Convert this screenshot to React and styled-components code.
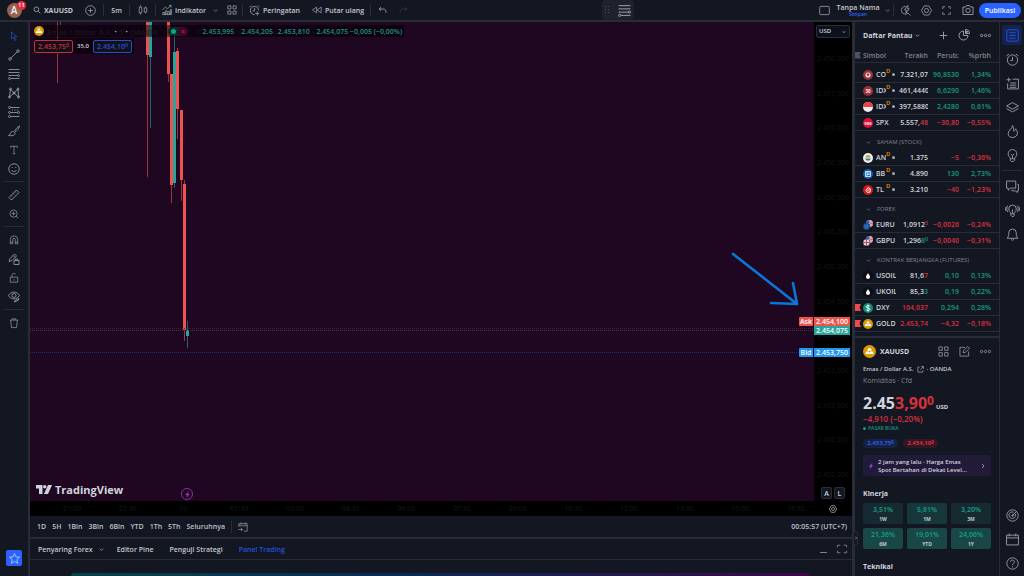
import React, { useState } from "react";
import styled, { createGlobalStyle, css } from "styled-components";

const GlobalStyle = createGlobalStyle`
  * { box-sizing: border-box; }
  html, body { margin: 0; background: #131722; }
  body {
    font-family: "Open Sans", "Noto Sans", sans-serif;
    font-size: 7px;
    line-height: 9px;
    color: #d1d4dc;
    overflow: hidden;
  }
  button, select {
    font: inherit;
    color: inherit;
    background: none;
    border: 0;
    padding: 0;
    margin: 0;
  }
  button { cursor: pointer; }
  a { color: inherit; text-decoration: none; }
  svg { display: block; flex: none; }
`;

const UP = "#159983";
const DOWN = "#d9303f";
const LINE = "#282c37";

/* ---------- icons ---------- */

const paths = {
  search: <><circle cx="10" cy="10" r="7" /><path d="M15.500 15.500 22 22" /></>,
  plusCircle: <><circle cx="12" cy="12" r="10.500" /><path d="M12 7v10M7 12h10" /></>,
  candles: <path d="M6 1v4M6 19v4M18 4v3M18 17v3M3 5h6v14H3zM15 7h6v10h-6z" />,
  indicator: <path d="M1 12 8 5l5 4 9-8M17 1h5v5M2 23v-5h4v5M8 23v-9h4v9M14 23v-7h4v7M20 23V11h3v12M1 23h22" />,
  chevron: <path d="m4 8 8 8 8-8" />,
  chevronRight: <path d="m8 4 8 8-8 8" />,
  grid: <path d="M2 2h7.500v7.500H2zM14.500 2H22v7.500h-7.500zM2 14.500h7.500V22H2zM14.500 14.500H22V22h-7.500z" />,
  alarm: <><path d="M12 21a9 9 0 1 1 9-9M12 6v7H8M1 5l4-4M19 1l4 4" /><path d="M18 14v9M13.500 18.500h9" /></>,
  clock: <><circle cx="12" cy="13" r="9.500" /><path d="M12 7v7H8M1 5.500 5.500 2M18.500 2 23 5.500" /></>,
  rewind: <path d="M11 5v14L1 12zM22 5v14l-10-7z" />,
  undo: <path d="M8 3 3 8l5 5M3 8h11c5 0 7 3 7 8v2" />,
  redo: <path d="m16 3 5 5-5 5M21 8H10c-5 0-7 3-7 8v2" />,
  square: <rect x="1.500" y="3" width="21" height="18" rx="2" />,
  quick: <><path d="M12 3a8.500 8.500 0 1 0 5 15M17 17l6 6" /><path d="m15 2-5 9h4l-1 7 7-10h-4l2-6z" /></>,
  hexagon: <><path d="M7 2h10l6 10-6 10H7L1 12z" /><circle cx="12" cy="12" r="4.500" /></>,
  full: <path d="M2 8V2h6M16 2h6v6M22 16v6h-6M8 22H2v-6" />,
  camera: <><path d="M2 6h5l2-3h6l2 3h5v15H2z" /><circle cx="12" cy="13" r="4.500" /></>,
  plus: <path d="M12 2v20M2 12h20" />,
  pie: <><path d="M11 4a9 9 0 1 0 9 9h-9z" /><path d="M15 1v8h8c0-5-3-8-8-8zM16 8l5-5M16 4l3 3" /></>,
  dots: <><circle cx="3.500" cy="12" r="2.500" /><circle cx="12" cy="12" r="2.500" /><circle cx="20.500" cy="12" r="2.500" /></>,
  edit: <><path d="M13 3H2v19h19V12" /><path d="m9 15 1-5 9-9 4 4-9 9z" /></>,
  popout: <path d="M9 4H3v17h17v-6M14 2h8v8M22 2 12 12" />,
  cursor: <path d="M6 2v17l4-4 4 8 3-2-4-7h6z" />,
  trend: <><circle cx="4" cy="20" r="2.500" /><circle cx="20" cy="4" r="2.500" /><path d="M6 18 18 6" /></>,
  fib: <><path d="M1 3h22M1 9h22M1 15h18M5 21h18" /><circle cx="21" cy="15" r="2" /><circle cx="3" cy="21" r="2" /></>,
  pattern: <><path d="M3 20 5 4l7 8 8-8 1 16-9-8-9 8" /><circle cx="5" cy="4" r="2" /><circle cx="20" cy="4" r="2" /><circle cx="3" cy="20" r="2" /><circle cx="21" cy="20" r="2" /><circle cx="12" cy="12" r="2" /></>,
  forecast: <><path d="M5 3h18M5 13h14M5 21h18" /><circle cx="3" cy="3" r="2" /><circle cx="3" cy="13" r="2" /><circle cx="21" cy="13" r="2" /><circle cx="3" cy="21" r="2" /><path d="M8 8h14" strokeDasharray="2 3" /></>,
  brush: <path d="M1 21c4 0 3-8 8-8 3 0 5 2 5 4 0 4-6 5-13 4M13 12c3-5 6-8 10-10-1 5-4 8-9 12" />,
  text: <path d="M4 7V3h16v4M12 3v18M9 21h6" />,
  smile: <><circle cx="12" cy="12" r="10.500" /><path d="M8.500 8v2M15.500 8v2M7 14c2 4 8 4 10 0" /></>,
  ruler: <path d="m2 17 15-15 5 5L7 22zM6 13l2 2M10 9l2 2M14 5l2 2" />,
  zoom: <><circle cx="11" cy="11" r="8.500" /><path d="m17 17 5 5M11 7v8M7 11h8" /></>,
  magnet: <path d="M3 21V11a9 9 0 0 1 18 0v10h-6V11a3 3 0 0 0-6 0v10zM3 17h6M15 17h6" />,
  penLock: <><path d="m2 17 2-6 9-9 4 4-9 9zM10 5l4 4" /><path d="M12 15h10v8H12zM15 15v-3h4v3" /></>,
  lock: <><path d="M3 10h18v12H3zM7 10V6a5 5 0 0 1 9-3" /><path d="M12 15v3" /></>,
  eye: <><path d="M1 9c5-9 17-9 22 0-5 9-17 9-22 0z" /><circle cx="12" cy="9" r="4" /><path d="m12 22 2-3 8-4-2 4z" /></>,
  trash: <path d="M2 5h20M8 5V2h8v3M4 5l2 18h12l2-18" />,
  star: <path d="m12 1 3.200 7.500 8 .7-6.100 5.300 1.900 8L12 18.200 5 22.500l1.900-8L.8 9.200l8-.7z" />,
  list: <><rect x="1.500" y="1.500" width="21" height="21" rx="2" /><path d="M6 7h12M6 12h12M6 17h12" /></>,
  addList: <path d="M5 1v8M1 5h8M12 4h11v18H3V12M8 11h11M7 15h12M7 19h12" />,
  layers: <path d="m12 3 11 6-11 6L1 9zM1 14l11 6 11-6" />,
  flame: <path d="M12 1c0 6-8 8-8 15 0 4 3 7 8 7s9-3 9-8c0-4-2-6-3-8-1 3-2 4-4 4 0-4 0-7-2-10z" />,
  bulb: <><path d="M8 18c0-3-4-4-4-9a8 8 0 0 1 16 0c0 5-4 6-4 9zM8 18v3l2 2h4l2-2v-3M9 9l3 3 3-3M12 12v5" /></>,
  chat: <path d="M1 2h17v13H8l-4 4v-4H1zM21 8h2v12h-2v3l-4-3h-6v-2" />,
  signal: <path d="M9 18c0-3-4-4-4-9a7 7 0 0 1 14 0c0 5-4 6-4 9zM9 18v3l2 2h3l1-2v-3M12 10v7M3 3C1 7 1 11 3 15M21 3c2 4 2 8 0 12M0 5c-1 3-1 5 0 8M24 5c1 3 1 5 0 8" />,
  bell: <path d="M2 19c3-3 3-6 3-10a7 7 0 0 1 14 0c0 4 0 7 3 10zM10 20c0 4 4 4 4 0" />,
  target: <><circle cx="12" cy="12" r="10.500" /><path d="M17 9a6 6 0 1 1-3-3M12 12l8-8" /><circle cx="12" cy="12" r="1.500" /></>,
  calendar: <path d="M1 4h22v18H1zM1 9h22M6 1v5M18 1v5" />,
  help: <><circle cx="12" cy="12" r="10.500" /><path d="M8.500 9c0-5 7-4 7 0 0 3-3.500 2.500-3.500 6M12 17v2" /></>,
  gotoDate: <path d="M2 11V4h20v18h-8M2 9h20M7 1v5M17 1v5M1 18h9M7 14l4 4-4 4" />,
  minus: <path d="M3 20h18" />,
  maximize: <path d="M1 8V3h7M16 3h7v5M23 16v5h-7M8 21H1v-5" />,
  bolt: <path d="M15 2 5 14h6l-2 8L19 10h-6z" fill="currentColor" />,
};

const Icon = ({ name, size = 12, weight = 1.7 }) => (
  <svg width={size} height={size} viewBox="0 0 24 24" overflow="visible" fill="none"
    stroke="currentColor" strokeWidth={weight} strokeLinejoin="round" aria-hidden="true">
    {paths[name]}
  </svg>
);

const GoldCoin = ({ size }) => (
  <svg width={size} height={size} viewBox="0 0 20 20" aria-hidden="true">
    <circle cx="10" cy="10" r="10" fill="#d99a05" />
    <path d="M8 5h4l1.500 4h-7zM5 10h4l1.500 4h-7zM11 10h4l1.500 4h-7z" fill="#fff" />
  </svg>
);

/* ---------- shell ---------- */

const Shell = styled.div`
  display: flex;
  flex-direction: column;
  gap: 2px;
  height: 100vh;
  background: ${LINE};
`;

const Body = styled.div`
  display: flex;
  flex: 1;
  min-height: 0;
`;

/* ---------- top bar ---------- */

const TopBar = styled.header`
  position: relative;
  display: flex;
  align-items: center;
  height: 20px;
  background: #131722;
  font-weight: 600;
`;

const Slot = styled.button`
  display: flex;
  align-items: center;
  justify-content: center;
  gap: 3px;
  height: 20px;
  width: ${(p) => p.$w}px;
  padding: ${(p) => (p.$menu ? "0 4px 0 6px" : 0)};
  white-space: nowrap;
  color: ${(p) => (p.$muted ? "#363a45" : "#c3c6ce")};
  font-weight: ${(p) => (p.$bold ? 700 : 600)};
  svg { color: ${(p) => (p.$muted ? "#363a45" : "#a4a7b0")}; }
`;

const Rule = styled.span`
  width: 1px;
  height: 12px;
  background: #2a2e39;
`;

const Spacer = styled.span`
  flex: 1;
`;

const Avatar = styled.button`
  position: relative;
  width: 28px;
  height: 20px;
  display: grid;
  place-items: center;
`;

const Face = styled.span`
  display: grid;
  place-items: center;
  width: 15px;
  height: 15px;
  border-radius: 50%;
  background: #96624f;
  color: #eee;
  font-size: 10px;
`;

const Badge = styled.span`
  position: absolute;
  top: 1px;
  right: 2px;
  width: 9px;
  height: 9px;
  border-radius: 50%;
  background: #e22c3d;
  color: #fff;
  font-size: 6px;
  font-weight: 600;
  text-align: center;
`;

const Floating = styled.div`
  position: absolute;
  left: 602px;
  top: 0;
  display: flex;
  align-items: center;
  justify-content: center;
  gap: 8px;
  width: 32px;
  height: 20px;
  border-radius: 4px;
  background: #1e222d;
  color: #a8abb4;
`;

const LayoutName = styled.button`
  display: flex;
  flex-direction: column;
  align-items: center;
  width: 46px;
  color: #c3c6ce;
  font-weight: 600;
  line-height: 7px;
  small {
    font-size: 5px;
    line-height: 6px;
    color: #2962ff;
  }
`;

const Publish = styled.button`
  width: 42px;
  height: 15px;
  margin-right: 3px;
  border-radius: 8px;
  background: #2962ff;
  color: #fff;
  font-weight: 600;
`;

/* ---------- drawing tools ---------- */

const Tools = styled.nav`
  display: flex;
  flex-direction: column;
  align-items: center;
  width: 28px;
  margin-right: 2px;
  padding: 4px 0 10px;
  background: #131722;
`;

const Tool = styled.button`
  display: grid;
  place-items: center;
  width: 20px;
  height: 19px;
  color: ${(p) => (p.$active ? "#2450d8" : "#9a9da6")};
`;

const ToolRule = styled.span`
  width: 20px;
  height: 1px;
  margin: 3px 0;
  background: ${LINE};
`;

const StarButton = styled.button`
  display: grid;
  place-items: center;
  width: 16px;
  height: 16px;
  margin-top: auto;
  border-radius: 2px;
  background: #2962ff;
  color: #c9d6ff;
`;

/* ---------- chart ---------- */

const Main = styled.main`
  display: flex;
  flex-direction: column;
  flex: 1;
  min-width: 0;
`;

const ChartArea = styled.section`
  position: relative;
  display: flex;
  flex: 1;
  min-height: 0;
  background: #000;
`;

const Plot = styled.div`
  position: relative;
  flex: 1;
  min-width: 0;
  overflow: hidden;
  background: #1f0722;
`;

const Drawing = styled.svg`
  position: absolute;
  inset: 0;
  width: 100%;
  height: 100%;
`;

const Legend = styled.div`
  position: absolute;
  left: 4px;
  top: 3px;
  display: flex;
  flex-direction: column;
  align-items: flex-start;
  gap: 1px;
`;

const LegendRow = styled.div`
  display: flex;
  align-items: center;
  height: ${(p) => (p.$tall ? 16 : 12)}px;
  gap: ${(p) => (p.$tall ? 3 : 0)}px;
  padding-right: 2px;
  background: rgba(0, 0, 0, 0.5);
  white-space: nowrap;
`;

const LegendTitle = styled.span`
  width: 115px;
  margin-left: 3px;
  font-size: 8px;
  color: #231a26;
  b { color: #b5b8c0; }
`;

const Status = styled.span`
  display: flex;
  align-items: center;
  justify-content: space-around;
  width: 20px;
  height: 9px;
  margin: 0 9px 0 6px;
  border-radius: 5px;
  overflow: hidden;
  background: linear-gradient(90deg, #092b2b 50%, #3c0726 50%);
  line-height: 7px;
  font-weight: 700;
  color: #c2185b;
  i {
    width: 5px;
    height: 5px;
    border-radius: 50%;
    background: #0da587;
  }
`;

const Ohlc = styled.span`
  width: ${(p) => p.$w || 38}px;
  color: #1f8e84;
  font-weight: 600;
  i { font-style: normal; color: #1d1020; }
`;

const Quote = styled.button`
  width: 39px;
  height: 13px;
  border: 1px solid ${(p) => p.$c};
  border-radius: 2px;
  color: ${(p) => p.$c};
  background: #131019;
  font-weight: 600;
`;

const Spread = styled.span`
  width: 12px;
  font-size: 6px;
  font-weight: 600;
  margin: 0 1px;
  text-align: center;
`;

const Sup = styled.sup`
  font-size: 0.75em;
  line-height: 0;
  vertical-align: 0.3em;
  color: ${(p) => p.$c || "inherit"};
`;

const Brand = styled.a`
  position: absolute;
  left: 6px;
  bottom: 5px;
  display: flex;
  align-items: center;
  gap: 3px;
  font-size: 11px;
  line-height: 13px;
  font-weight: 700;
  color: #d1d4dc;
`;

const EventMark = styled.button`
  position: absolute;
  left: 151px;
  bottom: 1px;
  display: grid;
  place-items: center;
  width: 12px;
  height: 12px;
  border: 1px solid #8b2fa0;
  border-radius: 50%;
  color: #9a36b0;
`;

const PriceAxis = styled.aside`
  display: flex;
  flex-direction: column;
  align-items: center;
  width: 38px;
  padding-top: 3px;
  background: #000;
`;

const CurrencyBox = styled.label`
  display: flex;
  align-items: center;
  width: 34px;
  height: 13px;
  padding: 0 3px 0 2px;
  border: 1px solid #2a2e39;
  border-radius: 2px;
  background: #0e1119;
`;

const Currency = styled.select`
  flex: 1;
  min-width: 0;
  appearance: none;
  font-size: 6px;
  font-weight: 600;
`;

const Scale = styled.div`
  display: flex;
  flex: 1;
  flex-direction: column;
  justify-content: space-between;
  padding: 16px 0 8px;
  color: #12151c;
`;

const AxisModes = styled.div`
  display: flex;
  gap: 2px;
  margin-bottom: 2px;
`;

const ModeButton = styled.button`
  width: 11px;
  height: 12px;
  border: 1px solid #2a2e39;
  border-radius: 2px;
  background: #131722;
  font-weight: 600;
`;

/* price labels sit on the seam between the plot and the axis */
const PriceTag = styled.div`
  position: absolute;
  right: 2px;
  top: ${(p) => p.$top}px;
  display: flex;
  gap: 1px;
  height: 9px;
  color: #fff;
  font-weight: 600;
  span {
    padding: 0 2px;
    background: ${(p) => p.$c};
    text-align: center;
  }
  span:last-child { width: 36px; }
  span:first-child:not(:last-child) { width: 14px; padding: 0; border-radius: 1px 0 0 1px; }
`;

const TimeAxis = styled.div`
  display: flex;
  height: 15px;
  background: #000;
  color: #18181d;
`;

const Times = styled.div`
  display: flex;
  flex: 1;
  align-items: center;
  justify-content: space-between;
  padding: 0 9px 0 33px;
  span { width: 18px; text-align: center; }
`;

const AxisSettings = styled.button`
  display: grid;
  place-items: center;
  width: 38px;
  color: #9a9da6;
`;

const Strip = styled.div`
  display: flex;
  align-items: center;
  height: 21px;
  padding: 0 5px 0 7px;
  background: #131722;
  font-weight: 600;
  ${(p) => p.$tabs && css`
    margin-top: 2px;
    border-bottom: 1px solid ${LINE};
  `}
`;

const Range = styled.button`
  margin-right: ${(p) => (p.$last ? 0 : 6)}px;
  color: #bfc2ca;
  font-weight: 600;
`;

const BottomTab = styled.button`
  display: flex;
  align-items: center;
  gap: 6px;
  margin: 0 ${(p) => p.$gap || 15}px 0 1px;
  font-weight: 600;
  color: ${(p) => (p.$active ? "#2450d8" : "#c3c6ce")};
`;

const StripIcon = styled.button`
  margin-left: ${(p) => (p.$wide ? 9 : 6)}px;
  color: #9a9da6;
`;

const BottomPanel = styled.div`
  display: flex;
  align-items: flex-end;
  height: 16px;
  padding: 0 42px 0 41px;
  background: #131722;
`;

const Banner = styled.div`
  flex: 1;
  height: 3px;
  border-radius: 4px 4px 0 0;
  background: linear-gradient(90deg, #07434b, #082a55 45%, #3c0748);
`;

/* ---------- right side ---------- */

const Side = styled.aside`
  display: flex;
  flex-direction: column;
  width: 144px;
  margin-left: 3px;
  background: #131722;
`;

const SideHead = styled.div`
  display: flex;
  align-items: center;
  gap: 10px;
  height: 26px;
  padding: 0 8px;
  color: #aeb1b9;
`;

const ListName = styled.button`
  display: flex;
  flex: 1;
  align-items: center;
  gap: 3px;
  white-space: nowrap;
  font-weight: 700;
  color: #d1d4dc;
`;

const Table = styled.table`
  width: 100%;
  table-layout: fixed;
  border-collapse: separate;
  border-spacing: 0;
  th, td {
    padding: 0;
    overflow: hidden;
    text-align: right;
    white-space: nowrap;
  }
  th:first-child, td:first-child { text-align: left; }
`;

const HeadRow = styled.tr`
  height: 15px;
  color: #80838c;
  th {
    font-weight: 600;
    border-bottom: 1px solid ${LINE};
  }
`;

const Row = styled.tr`
  height: 16px;
  font-weight: 600;
  td { border-bottom: 1px solid ${LINE}; }
`;

const GapRow = styled.tr`
  height: 4px;
  td { line-height: 3px; }
`;

const GroupRow = styled.tr`
  height: 19px;
  color: #80838c;
  font-size: 6px;
  th { padding-top: 3px; font-weight: 400; }
  span { display: flex; align-items: center; gap: 6px; padding-left: 11px; }
`;

const Name = styled.span`
  display: flex;
  align-items: center;
`;

const Flag = styled.span`
  width: 6px;
  height: 7px;
  margin-right: 2px;
  background: ${(p) => p.$c || "transparent"};
  clip-path: polygon(0 0, 100% 0, 75% 50%, 100% 100%, 0 100%);
`;

const Ticker = styled.span`
  width: ${(p) => (p.$short ? 10 : 20)}px;
  margin-left: 3px;
  overflow: hidden;
`;

const Delay = styled.span`
  position: relative;
  top: -3px;
  font-size: 6px;
  font-weight: 700;
  color: #d07a08;
`;

const Dot = styled.span`
  width: 3px;
  height: 3px;
  margin-left: 2px;
  border-radius: 50%;
  background: #a3a6af;
`;

const Tone = styled.span`
  color: ${(p) => (p.$t === "up" ? UP : p.$t === "down" ? DOWN : "inherit")};
`;

const Details = styled.section`
  display: flex;
  flex-direction: column;
  flex: 1;
  min-height: 0;
  overflow: hidden;
  margin-top: 4px;
  padding: 0 8px;
  border-top: 2px solid ${LINE};
`;

const DetailHead = styled.div`
  display: flex;
  align-items: center;
  gap: 10px;
  height: 26px;
  color: #9a9da6;
  strong { flex: 1; margin-left: -6px; color: #d1d4dc; }
`;

const Sub = styled.div`
  display: flex;
  align-items: center;
  gap: 3px;
  height: 11px;
  font-weight: ${(p) => (p.$muted ? 400 : 600)};
  color: ${(p) => (p.$muted ? "#80838c" : "#c3c6ce")};
  font-size: ${(p) => (p.$muted ? 7 : 6)}px;
`;

const BigPrice = styled.div`
  display: flex;
  align-items: baseline;
  gap: 2px;
  margin-top: 7px;
  height: 20px;
  font-size: 16px;
  line-height: 20px;
  font-weight: 700;
  small { font-size: 6px; }
`;

const Change = styled.div`
  height: 11px;
  font-size: 8px;
  line-height: 11px;
  font-weight: 600;
  color: ${DOWN};
`;

const Market = styled.div`
  display: flex;
  align-items: center;
  gap: 2px;
  font-size: 5px;
  font-weight: 600;
  color: ${UP};
  i { width: 3px; height: 3px; border-radius: 50%; background: ${UP}; }
`;

const Pills = styled.div`
  display: flex;
  gap: 5px;
  margin: 6px 0 7px;
`;

const Pill = styled.span`
  width: 35px;
  border-radius: 5px;
  text-align: center;
  font-size: 6px;
  font-weight: 700;
  color: ${(p) => (p.$sell ? "#dd3142" : "#2a5be8")};
  background: ${(p) => (p.$sell ? "#321823" : "#172144")};
`;

const News = styled.a`
  display: flex;
  align-items: center;
  gap: 4px;
  height: 21px;
  padding: 0 5px;
  border-radius: 3px;
  background: #211a38;
  font-size: 6px;
  line-height: 8px;
  font-weight: 600;
  color: #d1d4dc;
  span { flex: 1; white-space: nowrap; }
`;

const Purple = styled.i`
  color: #9d4fd8;
`;

const Heading = styled.h2`
  margin: 13px 0 0;
  font-size: 7px;
  line-height: 9px;
  font-weight: 700;
`;

const Perf = styled.div`
  display: grid;
  grid-template-columns: repeat(3, 1fr);
  gap: 4px;
  margin-top: 5px;
`;

const PerfCell = styled.div`
  display: flex;
  flex-direction: column;
  align-items: center;
  justify-content: center;
  height: 21px;
  border-radius: 2px;
  background: ${(p) => ["#162a31", "#17373b", "#194745"][p.$level]};
  color: #15a087;
  line-height: 10px;
  font-weight: 600;
  small {
    font-size: 5px;
    line-height: 8px;
    font-weight: 700;
    color: #c3c6ce;
  }
`;

const Rail = styled.nav`
  display: flex;
  flex-direction: column;
  align-items: center;
  width: 25px;
  padding: 1px 0;
  border-left: 1px solid ${LINE};
  background: #131722;
`;

const RailButton = styled.button`
  display: grid;
  place-items: center;
  width: 20px;
  height: 20px;
  margin: 2px 0;
  border-radius: 3px;
  color: ${(p) => (p.$active ? "#2656e6" : "#9a9da6")};
  background: ${(p) => (p.$active ? "#142350" : "none")};
`;

const Collapse = styled.button`
  position: absolute;
  z-index: 1;
  right: 166px;
  bottom: 31px;
  display: grid;
  place-items: center;
  width: 5px;
  height: 14px;
  border: 1px solid ${LINE};
  border-radius: 2px;
  background: #131722;
`;

/* ---------- data ---------- */

const RED = "#ef5350";
const GREEN = "#26a69a";

// x, body top, body bottom, wick top, wick bottom, colour
const candles = [
  [27, 0, 0, 0, 61, RED],
  [30, 0, 0, 0, 3, GREEN],
  [117, 0, 33, 0, 155, RED],
  [120, 0, 35, 0, 106, GREEN],
  [138, 0, 52, 0, 60, RED],
  [141, 52, 163, 52, 181, RED],
  [144, 30, 161, 12, 166, GREEN],
  [147, 29, 87, 26, 117, RED],
  [151, 88, 158, 88, 179, RED],
  [154, 162, 308, 158, 319, RED],
  [157, 308, 314, 299, 326, GREEN],
];

const scale = ["2.458,000", "2.457,500", "2.457,000", "2.456,500", "2.456,000", "2.455,500", "2.455,000",
  "2.454,500", "2.454,000", "2.453,500", "2.453,000", "2.452,500", "2.452,000"];

const times = ["21:00", "22:30", "19", "01:30", "03:00", "04:30", "06:00", "07:30", "09:00", "10:30",
  "12:00", "13:30", "15:00", "16:30"];

const ranges = ["1D", "5H", "1Bln", "3Bln", "6Bln", "YTD", "1Th", "5Th", "Seluruhnya"];

const groups = [
  {
    rows: [
      { logo: "comp", name: "CO", delayed: true, last: "7.321,07", chg: "96,8530", pct: "1,34%", t: "up" },
      { logo: "idx30", name: "IDX", delayed: true, last: "461,4440", chg: "6,6290", pct: "1,46%", t: "up" },
      { logo: "idn", name: "IDX", delayed: true, last: "397,5880", chg: "2,4280", pct: "0,61%", t: "up" },
      { logo: "spx", name: "SPX", last: "5.557,", tick: "48", tickTone: "down", chg: "−30,80", pct: "−0,55%", t: "down" },
    ],
  },
  {
    title: "SAHAM (STOCK)",
    rows: [
      { logo: "an", name: "AN", delayed: true, last: "1.375", chg: "−5", pct: "−0,36%", t: "down" },
      { logo: "bb", name: "BB", delayed: true, last: "4.890", chg: "130", pct: "2,73%", t: "up" },
      { logo: "tl", name: "TL", delayed: true, last: "3.210", chg: "−40", pct: "−1,23%", t: "down" },
    ],
  },
  {
    title: "FOREX",
    rows: [
      { logo: "eur", name: "EURU", last: "1,0912", sup: "5", tickTone: "down", chg: "−0,0026", pct: "−0,24%", t: "down" },
      { logo: "gbp", name: "GBPU", last: "1,296", tick: "8", sup: "0", tickTone: "up", chg: "−0,0040", pct: "−0,31%", t: "down" },
    ],
  },
  {
    title: "KONTRAK BERJANGKA (FUTURES)",
    rows: [
      { logo: "oil", name: "USOIL", last: "81,6", tick: "7", tickTone: "down", chg: "0,10", pct: "0,13%", t: "up" },
      { logo: "oil", name: "UKOIL", last: "85,3", tick: "3", tickTone: "up", chg: "0,19", pct: "0,22%", t: "up" },
      { logo: "dxy", name: "DXY", flag: true, tick: "104,037", tickTone: "down", chg: "0,294", pct: "0,28%", t: "up" },
      { logo: "gold", name: "GOLD", flag: true, tick: "2.453,74", tickTone: "down", chg: "−4,32", pct: "−0,18%", t: "down" },
    ],
  },
];

const perf = [
  ["3,51%", "1W", 0], ["5,81%", "1M", 1], ["3,20%", "3M", 0],
  ["21,36%", "6M", 2], ["19,01%", "YTD", 2], ["24,06%", "1Y", 2],
];

const logos = {
  comp: <><circle cx="10" cy="10" r="10" fill="#9c3038" /><circle cx="10" cy="10" r="5" fill="#eee" /><path d="m7 9 3-3 3 3-3 4z" fill="#9c3038" /></>,
  idx30: <><circle cx="10" cy="10" r="10" fill="#9c3038" /><text x="10" y="13" fontSize="9" fontWeight="700" textAnchor="middle" fill="#eee">30</text></>,
  idn: <><circle cx="10" cy="10" r="10" fill="#eee" /><path d="M0 10a10 10 0 0 1 20 0z" fill="#ef4044" /></>,
  spx: <><circle cx="10" cy="10" r="10" fill="#d9123a" /><text x="10" y="13" fontSize="8" fontWeight="700" textAnchor="middle" fill="#fff">500</text></>,
  an: <><circle cx="10" cy="10" r="10" fill="#eee" /><path d="M5 9a5 5 0 0 1 10 0z" fill="#c59a3a" /><path d="M4 11h12l-3 4H7z" fill="#268a8c" /></>,
  bb: <><circle cx="10" cy="10" r="10" fill="#0f5fb4" /><path d="M5 5h10v10H5zM8 8h6M8 11h6M8 5v10" fill="none" stroke="#fff" strokeWidth="1.500" /></>,
  tl: <><circle cx="10" cy="10" r="10" fill="#dd1717" /><path d="M6 11 10 5l5 3-1 6-5 1zM9 11l4-2" fill="none" stroke="#fff" strokeWidth="2" /></>,
  eur: <><circle cx="13" cy="7" r="7" fill="#e7e7ec" /><path d="M13 4h7M13 7h7M12 10h8" stroke="#d83a46" strokeWidth="1.500" /><path d="M6 6a7 7 0 0 1 7-6v6z" fill="#2c5cb8" /><circle cx="7" cy="13" r="7" fill="#1a5fb8" stroke="#131722" /><circle cx="7" cy="13" r="3" fill="none" stroke="#c9b04a" strokeDasharray="1 1.500" /></>,
  gbp: <><circle cx="13" cy="7" r="7" fill="#e7e7ec" /><path d="M13 4h7M13 7h7M12 10h8" stroke="#d83a46" strokeWidth="1.500" /><path d="M6 6a7 7 0 0 1 7-6v6z" fill="#2c5cb8" /><circle cx="7" cy="13" r="7" fill="#dfe2ea" stroke="#131722" /><path d="M7 6v14M0 13h14" stroke="#d83a46" strokeWidth="2" /></>,
  oil: <><circle cx="10" cy="10" r="10" fill="#0c0e13" /><path d="M10 4c2 4 4 5 4 8a4 4 0 0 1-8 0c0-3 2-4 4-8z" fill="#fff" /></>,
  dxy: <><circle cx="10" cy="10" r="10" fill="#0c8a72" /><path d="M14 7c-1-3-8-2-8 .500 0 3 8 2 8 5C14 16 7 16 6 13M10 3v14" fill="none" stroke="#fff" strokeWidth="2" /></>,
};

const Logo = ({ name }) =>
  name === "gold" ? <GoldCoin size={10} /> : (
    <svg width="10" height="10" viewBox="0 0 20 20" aria-hidden="true">{logos[name]}</svg>
  );

/* ---------- pieces ---------- */

const Header = () => (
  <TopBar>
    <Avatar aria-label="Akun"><Face>A</Face><Badge>11</Badge></Avatar>
    <Slot $w={50} $bold><Icon name="search" size={8} weight={2.5} />XAUUSD</Slot>
    <Slot $w={25} aria-label="Bandingkan"><Icon name="plusCircle" size={11} /></Slot>
    <Rule />
    <Slot $w={25}>5m</Slot>
    <Rule />
    <Slot $w={25} aria-label="Jenis chart"><Icon name="candles" size={10} /></Slot>
    <Rule />
    <Slot $w={66} $menu><Icon name="indicator" size={10} />Indikator<Spacer /><Icon name="chevron" size={5} weight={3} /></Slot>
    <Slot $w={20} aria-label="Templat"><Icon name="grid" size={10} /></Slot>
    <Rule />
    <Slot $w={63}><Icon name="alarm" size={11} />Peringatan</Slot>
    <Slot $w={64}><Icon name="rewind" size={10} />Putar ulang</Slot>
    <Rule />
    <Slot $w={22} aria-label="Urungkan"><Icon name="undo" size={9} weight={2.2} /></Slot>
    <Slot $w={20} $muted aria-label="Ulangi"><Icon name="redo" size={9} weight={2.2} /></Slot>
    <Floating>
      <svg width="5" height="8" viewBox="0 0 5 8" fill="#50535e" aria-hidden="true">
        <path d="M0 0h1v1H0zM3 0h1v1H3zM0 3h1v1H0zM3 3h1v1H3zM0 6h1v1H0zM3 6h1v1H3z" />
      </svg>
      <Icon name="fib" size={13} />
    </Floating>
    <Spacer />
    <Slot $w={22} aria-label="Tata letak"><Icon name="square" size={11} /></Slot>
    <LayoutName>Tanpa Nama<small>Simpan</small></LayoutName>
    <Slot $w={12} aria-label="Kelola tata letak"><Icon name="chevron" size={5} weight={3} /></Slot>
    <Rule />
    <Slot $w={22} aria-label="Pencarian cepat"><Icon name="quick" size={11} /></Slot>
    <Slot $w={20} aria-label="Pengaturan"><Icon name="hexagon" size={11} /></Slot>
    <Slot $w={20} aria-label="Layar penuh"><Icon name="full" size={9} weight={2} /></Slot>
    <Slot $w={23} aria-label="Ambil gambar"><Icon name="camera" size={12} /></Slot>
    <Publish>Publikasi</Publish>
  </TopBar>
);

const toolGroups = [
  ["cursor", "trend", "fib", "pattern", "forecast", "brush", "text", "smile"],
  ["ruler", "zoom"],
  ["magnet", "penLock", "lock", "eye"],
  ["trash"],
];

const smallTools = ["cursor", "text", "zoom", "magnet", "lock", "trash"];

const DrawingTools = () => (
  <Tools>
    {toolGroups.map((group, i) => (
      <React.Fragment key={i}>
        {i > 0 && <ToolRule />}
        {group.map((name) => (
          <Tool key={name} $active={name === "cursor"} aria-label={name}>
            <Icon name={name} size={smallTools.includes(name) ? 10 : 12} />
          </Tool>
        ))}
      </React.Fragment>
    ))}
    <StarButton aria-label="Favorit"><Icon name="star" size={11} /></StarButton>
  </Tools>
);

const Candles = () => (
  <Drawing aria-hidden="true">
    {candles.map(([x, top, bottom, wickTop, wickBottom, color]) => (
      <g key={x} fill={color}>
        <rect x={x} y={wickTop} width="1" height={wickBottom - wickTop} opacity="0.600" />
        <rect x={x - 1} y={top} width="3" height={bottom - top} />
      </g>
    ))}
    <path d="M0 306.500h4000" stroke="#5c1730" strokeDasharray="1 1" />
    <path d="M0 308.500h4000" stroke="#2b4148" strokeDasharray="1 1" />
    <path d="M0 330.500h4000" stroke="#20306a" strokeDasharray="1 1" />
    <path d="m703 232 64 50M763 261l4 21-26-1" fill="none" stroke="#0b76d6" strokeWidth="2.600" strokeLinecap="round" strokeLinejoin="round" />
  </Drawing>
);

const Chart = () => (
  <ChartArea>
    <Plot>
      <Candles />
      <Legend>
        <LegendRow>
          <GoldCoin size={10} />
          <LegendTitle>Emas / Dollar A.S. <b>·</b> 5 <b>·</b> OANDA</LegendTitle>
          <Status><i />≈</Status>
          <Ohlc $w={39}><i>O</i>2.453,995</Ohlc>
          <Ohlc><i>H</i>2.454,205</Ohlc>
          <Ohlc><i>L</i>2.453,810</Ohlc>
          <Ohlc><i>C</i>2.454,075</Ohlc>
          <Ohlc $w={52}>−0,005 (−0,00%)</Ohlc>
        </LegendRow>
        <LegendRow $tall>
          <Quote $c="#c92f40">2.453,75<Sup>0</Sup></Quote>
          <Spread>35,0</Spread>
          <Quote $c="#2450d0">2.454,10<Sup>0</Sup></Quote>
        </LegendRow>
      </Legend>
      <Brand href="#">
        <svg width="16" height="9" viewBox="0 0 32 18" fill="currentColor" aria-hidden="true">
          <path d="M0 0h13v18H6V7H0z" /><circle cx="17.500" cy="3.500" r="3.500" /><path d="M24 0h8l-8 18h-8z" />
        </svg>
        TradingView
      </Brand>
      <EventMark aria-label="Berita"><Icon name="bolt" size={7} weight={1} /></EventMark>
    </Plot>
    <PriceAxis>
      <CurrencyBox>
        <Currency aria-label="Mata uang"><option>USD</option></Currency>
        <Icon name="chevron" size={4} weight={4} />
      </CurrencyBox>
      <Scale>{scale.map((s) => <span key={s}>{s}</span>)}</Scale>
      <AxisModes><ModeButton>A</ModeButton><ModeButton>L</ModeButton></AxisModes>
    </PriceAxis>
    <PriceTag $top={295} $c={RED}><span>Ask</span><span>2.454,100</span></PriceTag>
    <PriceTag $top={304} $c={GREEN}><span>2.454,075</span></PriceTag>
    <PriceTag $top={326} $c="#2196f3"><span>Bid</span><span>2.453,750</span></PriceTag>
  </ChartArea>
);

const Watchlist = () => (
  <Table>
    <colgroup>
      <col style={{ width: 44 }} />
      <col style={{ width: 29 }} />
      <col style={{ width: 31 }} />
      <col style={{ width: 32 }} />
      <col />
    </colgroup>
    <thead>
      <HeadRow>
        <th><Name><Flag $c="#50535e" />Simbol</Name></th>
        <th>Terakh</th><th>Perub:</th><th>%prbh</th><th />
      </HeadRow>
      <GapRow><td colSpan={5} /></GapRow>
    </thead>
    {groups.map((g, i) => (
      <tbody key={i}>
        {g.title && (
          <GroupRow><th colSpan={5}><span><Icon name="chevron" size={5} weight={3} />{g.title}</span></th></GroupRow>
        )}
        {g.rows.map((r) => (
          <Row key={r.logo + r.chg}>
            <td>
              <Name>
                <Flag $c={r.flag && "#f0494b"} />
                <Logo name={r.logo} />
                <Ticker $short={r.delayed}>{r.name}</Ticker>
                {r.delayed && <><Delay>D</Delay><Dot /></>}
              </Name>
            </td>
            <td>
              {r.last}
              <Tone $t={r.tickTone}>{r.tick}{r.sup && <Sup>{r.sup}</Sup>}</Tone>
            </td>
            <td><Tone $t={r.t}>{r.chg}</Tone></td>
            <td><Tone $t={r.t}>{r.pct}</Tone></td>
            <td />
          </Row>
        ))}
      </tbody>
    ))}
  </Table>
);

const SymbolDetails = () => (
  <Details>
    <DetailHead>
      <GoldCoin size={13} />
      <strong>XAUUSD</strong>
      <Icon name="grid" size={11} />
      <Icon name="edit" size={11} />
      <Icon name="dots" size={11} />
    </DetailHead>
    <Sub>Emas / Dollar A.S. <Icon name="popout" size={7} weight={2} /> · OANDA</Sub>
    <Sub $muted>Komiditas · Cfd</Sub>
    <BigPrice>
      <span>2.45<Tone $t="down">3,90<Sup>0</Sup></Tone></span>
      <small>USD</small>
    </BigPrice>
    <Change>−4,910 (−0,20%)</Change>
    <Market><i />PASAR BUKA</Market>
    <Pills>
      <Pill>2.453,75<Sup>0</Sup></Pill>
      <Pill $sell>2.454,10<Sup>0</Sup></Pill>
    </Pills>
    <News href="#">
      <Purple><Icon name="bolt" size={6} weight={1} /></Purple>
      <span>2 jam yang lalu · Harga Emas<br />Spot Bertahan di Dekat Level...</span>
      <Icon name="chevronRight" size={6} weight={2.5} />
    </News>
    <Heading>Kinerja</Heading>
    <Perf>
      {perf.map(([value, label, level]) => (
        <PerfCell key={label} $level={level}>{value}<small>{label}</small></PerfCell>
      ))}
    </Perf>
    <Heading>Teknikal</Heading>
  </Details>
);

const App = () => {
  const [tab, setTab] = useState("Panel Trading");

  return (
    <>
      <GlobalStyle />
      <Shell>
        <Header />
        <Body>
          <DrawingTools />
          <Main>
            <Chart />
            <TimeAxis>
              <Times>{times.map((t) => <span key={t}>{t}</span>)}</Times>
              <AxisSettings aria-label="Pengaturan skala"><Icon name="hexagon" size={8} weight={2.5} /></AxisSettings>
            </TimeAxis>
            <Strip>
              {ranges.map((r) => <Range key={r}>{r}</Range>)}
              <Rule />
              <StripIcon aria-label="Buka tanggal"><Icon name="gotoDate" size={10} /></StripIcon>
              <Spacer />
              <Range $last>00:05:57 (UTC+7)</Range>
            </Strip>
            <Strip $tabs>
              <BottomTab $gap={12} $active={tab === "Penyaring Forex"} onClick={() => setTab("Penyaring Forex")}>
                Penyaring Forex <Icon name="chevron" size={5} weight={3} />
              </BottomTab>
              {["Editor Pine", "Penguji Strategi", "Panel Trading"].map((t) => (
                <BottomTab key={t} $active={tab === t} onClick={() => setTab(t)}>{t}</BottomTab>
              ))}
              <Spacer />
              <StripIcon aria-label="Kecilkan"><Icon name="minus" size={9} weight={2.2} /></StripIcon>
              <StripIcon $wide aria-label="Perbesar"><Icon name="maximize" size={10} /></StripIcon>
            </Strip>
            <BottomPanel><Banner /></BottomPanel>
          </Main>
          <Side>
            <SideHead>
              <ListName>Daftar Pantau <Icon name="chevron" size={5} weight={3} /></ListName>
              <Icon name="plus" size={9} weight={2.2} />
              <Icon name="pie" size={12} />
              <Icon name="dots" size={11} />
            </SideHead>
            <Watchlist />
            <SymbolDetails />
          </Side>
          <Rail>
            {["list", "clock", "addList", "layers", "flame", "bulb"].map((n) => (
              <RailButton key={n} $active={n === "list"} aria-label={n}><Icon name={n} size={13} /></RailButton>
            ))}
            <ToolRule />
            {["chat", "signal", "bell"].map((n) => (
              <RailButton key={n} aria-label={n}><Icon name={n} size={13} /></RailButton>
            ))}
            <Spacer />
            {["target", "calendar", "help"].map((n) => (
              <RailButton key={n} aria-label={n}><Icon name={n} size={13} /></RailButton>
            ))}
          </Rail>
          <Collapse aria-label="Tutup panel"><Icon name="chevronRight" size={4} weight={3} /></Collapse>
        </Body>
      </Shell>
    </>
  );
};

export default App;
